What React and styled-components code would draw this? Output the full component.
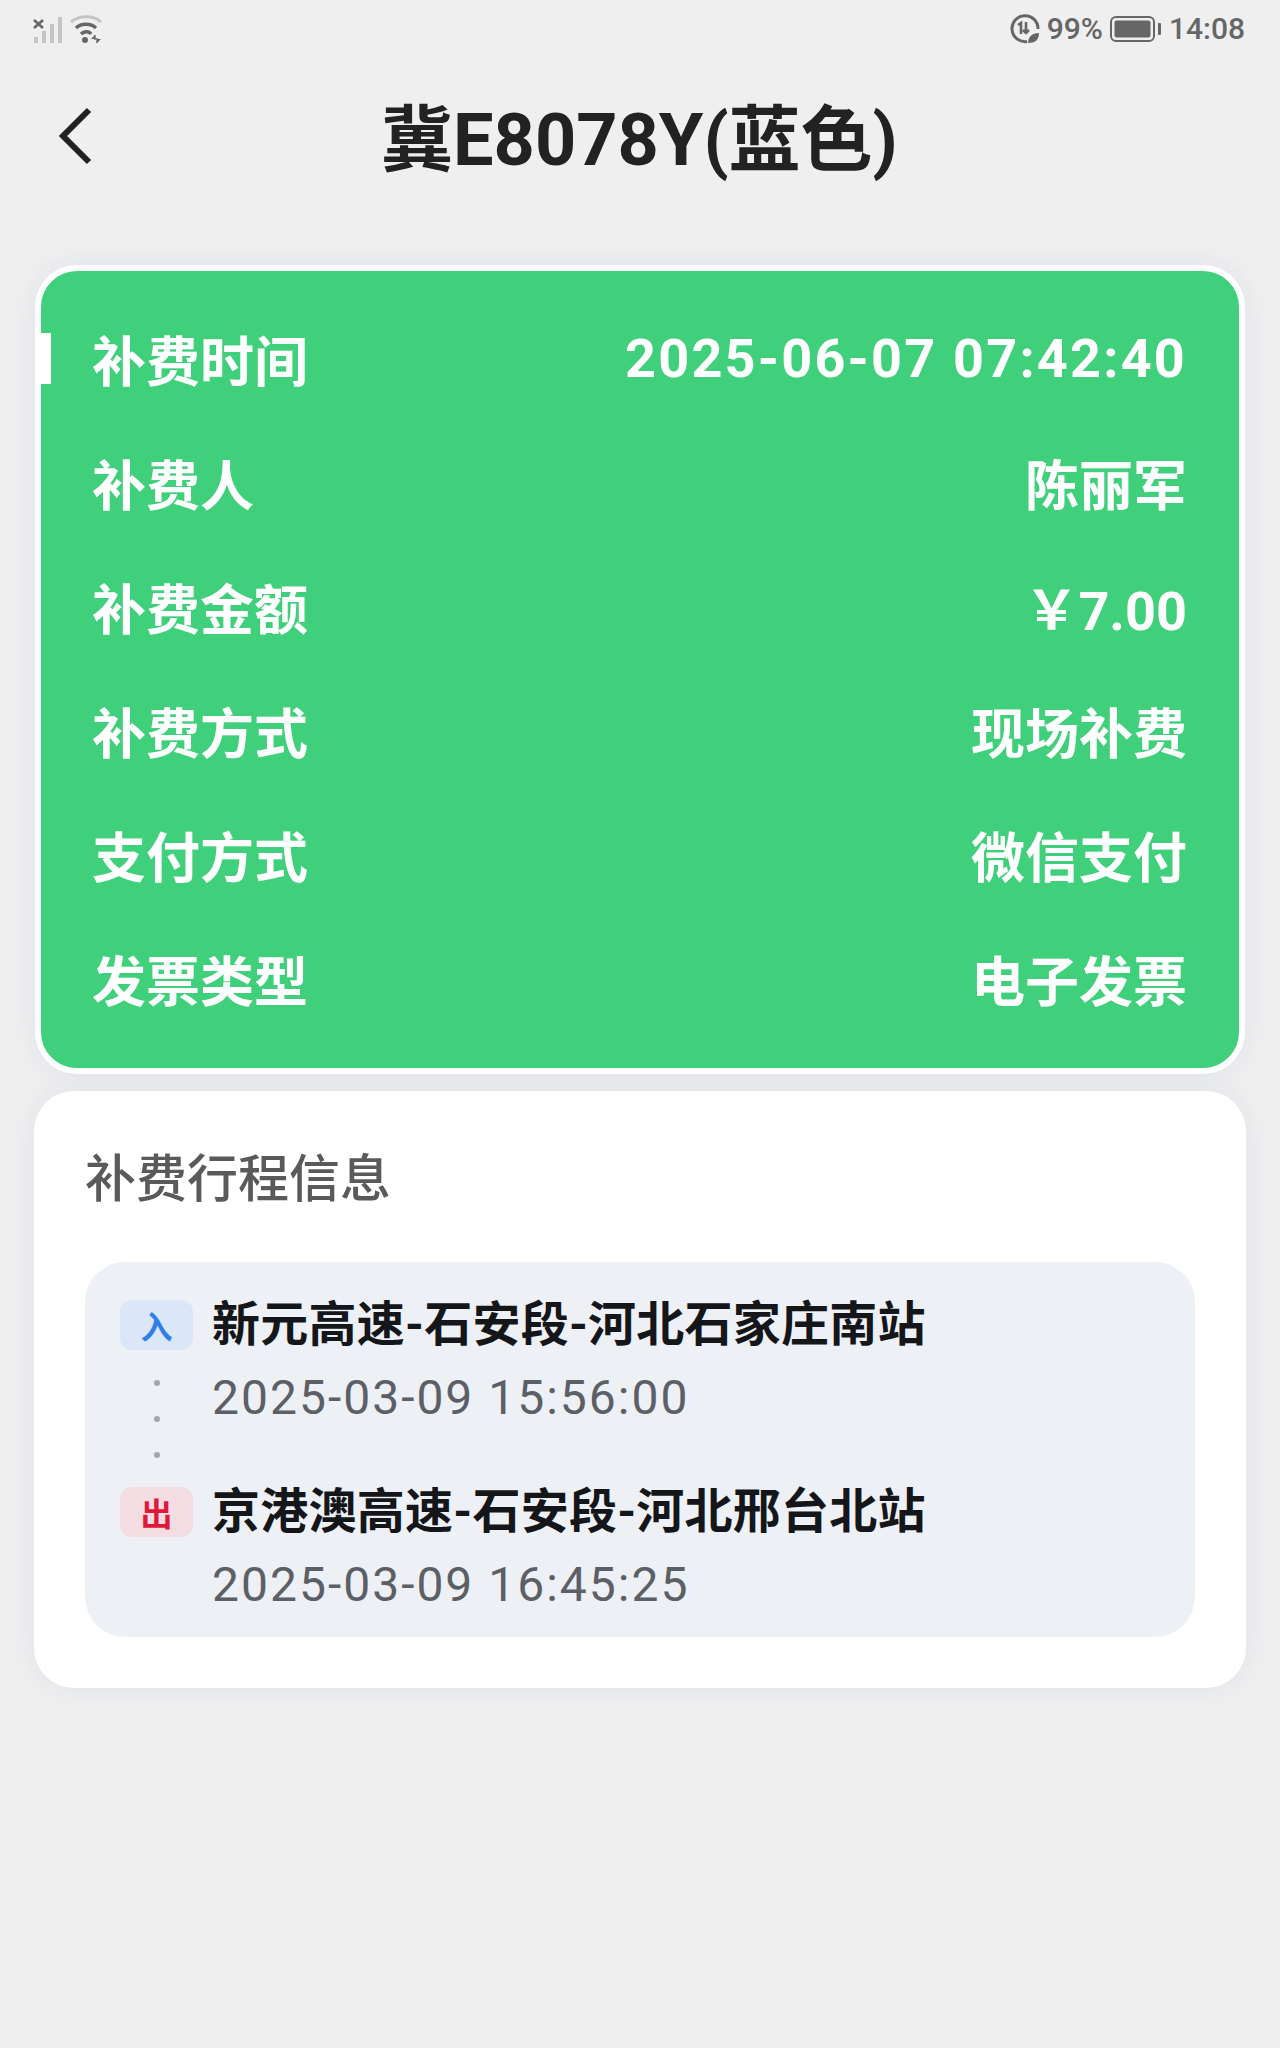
import React from 'react';
import styled, { createGlobalStyle } from 'styled-components';

const GlobalStyle = createGlobalStyle`
  html, body {
    margin: 0;
    padding: 0;
    background: #efeff0;
  }
  * {
    box-sizing: border-box;
  }
`;

const FONT = `Roboto, "Noto Sans CJK SC", sans-serif`;

const Page = styled.div`
  width: 1280px;
  height: 2048px;
  background: #efeff0;
  font-family: ${FONT};
  overflow: hidden;
`;

const StatusBar = styled.div`
  height: 58px;
  padding: 0 35px 0 33px;
  display: flex;
  align-items: center;
  justify-content: space-between;
  color: #666;
`;

const StatusGroup = styled.div`
  display: flex;
  align-items: center;
  gap: ${props => props.$gap || 6}px;
`;

const StatusText = styled.span`
  font-size: 30px;
  font-weight: 500;
  line-height: 1;
`;

const Header = styled.div`
  height: 146px;
  padding: 0 0 0 58px;
  display: grid;
  grid-template-columns: 60px 1fr 119px;
  align-items: center;
`;

const BackButton = styled.div`
  display: flex;
  margin-top: 10px;
`;

const Title = styled.h1`
  margin: 0;
  padding-top: 20px;
  text-align: center;
  font-size: 72px;
  font-weight: 700;
  color: #222;
  line-height: 1;
`;

const Content = styled.div`
  padding: 61px 34px 0;
  display: flex;
  flex-direction: column;
  gap: 17px;
`;

const FeeCard = styled.div`
  position: relative;
  height: 809px;
  margin: 0 1px;
  padding: 25px 52px 0 51px;
  background: #40d07b;
  border: 6px solid #fff;
  border-radius: 42px;
  box-shadow: 0 0 24px rgba(170, 180, 200, 0.22);
`;

const Indicator = styled.div`
  position: absolute;
  left: 0;
  top: 62px;
  width: 10px;
  height: 51px;
  background: #fff;
`;

const FeeRow = styled.div`
  height: 124px;
  display: flex;
  align-items: center;
  justify-content: space-between;
  color: #fff;
  font-size: 54px;
  font-weight: 700;
`;

const FeeValue = styled.span`
  letter-spacing: ${props => (props.$spaced ? '2.2px' : '0')};
`;

const TripCard = styled.div`
  height: 597px;
  padding: 54px 51px 0;
  background: #fff;
  border-radius: 40px;
  box-shadow: 0 0 24px rgba(170, 180, 200, 0.22);
`;

const TripTitle = styled.div`
  font-size: 51px;
  font-weight: 500;
  line-height: 70px;
  color: #5a5a5a;
`;

const TripPanel = styled.div`
  margin-top: 47px;
  height: 375px;
  padding: 38px 35px 0;
  background: #edf0f5;
  border-radius: 40px;
`;

const Stop = styled.div`
  height: 187px;
  display: grid;
  grid-template-columns: 73px 1fr;
  column-gap: 19px;
`;

const StopMark = styled.div`
  display: flex;
  flex-direction: column;
  align-items: center;
`;

const Badge = styled.div`
  width: 73px;
  height: 50px;
  border-radius: 12px;
  display: flex;
  align-items: center;
  justify-content: center;
  font-size: 32px;
  font-weight: 700;
  color: ${props => (props.$type === 'out' ? '#e0173a' : '#2e7fe8')};
  background: ${props => (props.$type === 'out' ? '#f3dde2' : '#dbe6f6')};
`;

const Dots = styled.div`
  margin-top: 30px;
  display: flex;
  flex-direction: column;
  gap: 30px;
`;

const Dot = styled.span`
  display: block;
  width: 6px;
  height: 6px;
  border-radius: 50%;
  background: #a4a6aa;
`;

const StopText = styled.div`
  display: flex;
  flex-direction: column;
`;

const StationName = styled.div`
  font-size: 48px;
  font-weight: 700;
  line-height: 50px;
  letter-spacing: 0.25px;
  color: #14161a;
  white-space: nowrap;
`;

const StationTime = styled.div`
  margin-top: 22px;
  font-size: 48px;
  font-weight: 400;
  line-height: 52px;
  letter-spacing: 2px;
  color: #5c6066;
  white-space: nowrap;
`;

const SignalIcon = () => (
  <svg width="30" height="28" viewBox="0 0 30 28">
    <path d="M1 5l9 8M10 5l-9 8" stroke="#666" strokeWidth="2.6" fill="none" />
    <g fill="#c4c4c4">
      <rect x="1" y="22" width="4" height="6" />
      <rect x="9" y="16" width="4" height="12" />
      <rect x="17" y="9" width="4" height="19" />
      <rect x="25" y="2" width="4" height="26" />
    </g>
  </svg>
);

const WifiIcon = () => (
  <svg width="34" height="28" viewBox="0 0 34 28" fill="none">
    <path d="M1 7C9 0 24 0 31 7" stroke="#c4c4c4" strokeWidth="3" />
    <path d="M6 13c5-5 15-5 20 0" stroke="#666" strokeWidth="3.4" />
    <path d="M11 19c3-3 8-3 10 0" stroke="#666" strokeWidth="3.4" />
    <circle cx="15" cy="25" r="3" fill="#666" />
    <path d="M25 20l-4 4h4zM27 28l4-4h-4z" fill="#666" />
    <path d="M25 20v5M27 23v5" stroke="#666" strokeWidth="1.4" />
  </svg>
);

const EcoIcon = () => (
  <svg width="30" height="30" viewBox="0 0 30 30" fill="none">
    <path d="M17 27.5A13 13 0 1 1 28 15" stroke="#666" strokeWidth="3" />
    <path d="M8 11l3-2v11M16 8v11M13 16l3 3 3-3" stroke="#666" strokeWidth="2.6" />
    <path d="M18 29c0-6 4-10 11-10 0 7-4 10-11 10z" fill="#666" />
  </svg>
);

const BatteryIcon = () => (
  <svg width="52" height="26" viewBox="0 0 52 26" fill="none">
    <rect x="1" y="1" width="43" height="24" rx="5" stroke="#666" strokeWidth="2" />
    <rect x="4.5" y="4.5" width="36" height="17" rx="2" fill="#666" />
    <rect x="48" y="7" width="3" height="12" rx="1" fill="#666" />
  </svg>
);

const BackIcon = () => (
  <svg width="34" height="58" viewBox="0 0 34 58" fill="none">
    <path d="M31 3L5 29l26 26" stroke="#222" strokeWidth="6" />
  </svg>
);

const feeRows = [
  { label: '补费时间', value: '2025-06-07 07:42:40', spaced: true },
  { label: '补费人', value: '陈丽军' },
  { label: '补费金额', value: '￥7.00' },
  { label: '补费方式', value: '现场补费' },
  { label: '支付方式', value: '微信支付' },
  { label: '发票类型', value: '电子发票' },
];

const App = () => (
  <Page>
    <GlobalStyle />
    <StatusBar>
      <StatusGroup $gap={7}>
        <SignalIcon />
        <WifiIcon />
      </StatusGroup>
      <StatusGroup $gap={7}>
        <EcoIcon />
        <StatusText>99%</StatusText>
        <BatteryIcon />
        <StatusText>14:08</StatusText>
      </StatusGroup>
    </StatusBar>

    <Header>
      <BackButton>
        <BackIcon />
      </BackButton>
      <Title>冀E8078Y(蓝色)</Title>
    </Header>

    <Content>
      <FeeCard>
        <Indicator />
        {feeRows.map(row => (
          <FeeRow key={row.label}>
            <span>{row.label}</span>
            <FeeValue $spaced={row.spaced}>{row.value}</FeeValue>
          </FeeRow>
        ))}
      </FeeCard>

      <TripCard>
        <TripTitle>补费行程信息</TripTitle>
        <TripPanel>
          <Stop>
            <StopMark>
              <Badge>入</Badge>
              <Dots>
                <Dot />
                <Dot />
                <Dot />
              </Dots>
            </StopMark>
            <StopText>
              <StationName>新元高速-石安段-河北石家庄南站</StationName>
              <StationTime>2025-03-09 15:56:00</StationTime>
            </StopText>
          </Stop>
          <Stop>
            <StopMark>
              <Badge $type="out">出</Badge>
            </StopMark>
            <StopText>
              <StationName>京港澳高速-石安段-河北邢台北站</StationName>
              <StationTime>2025-03-09 16:45:25</StationTime>
            </StopText>
          </Stop>
        </TripPanel>
      </TripCard>
    </Content>
  </Page>
);

export default App;
